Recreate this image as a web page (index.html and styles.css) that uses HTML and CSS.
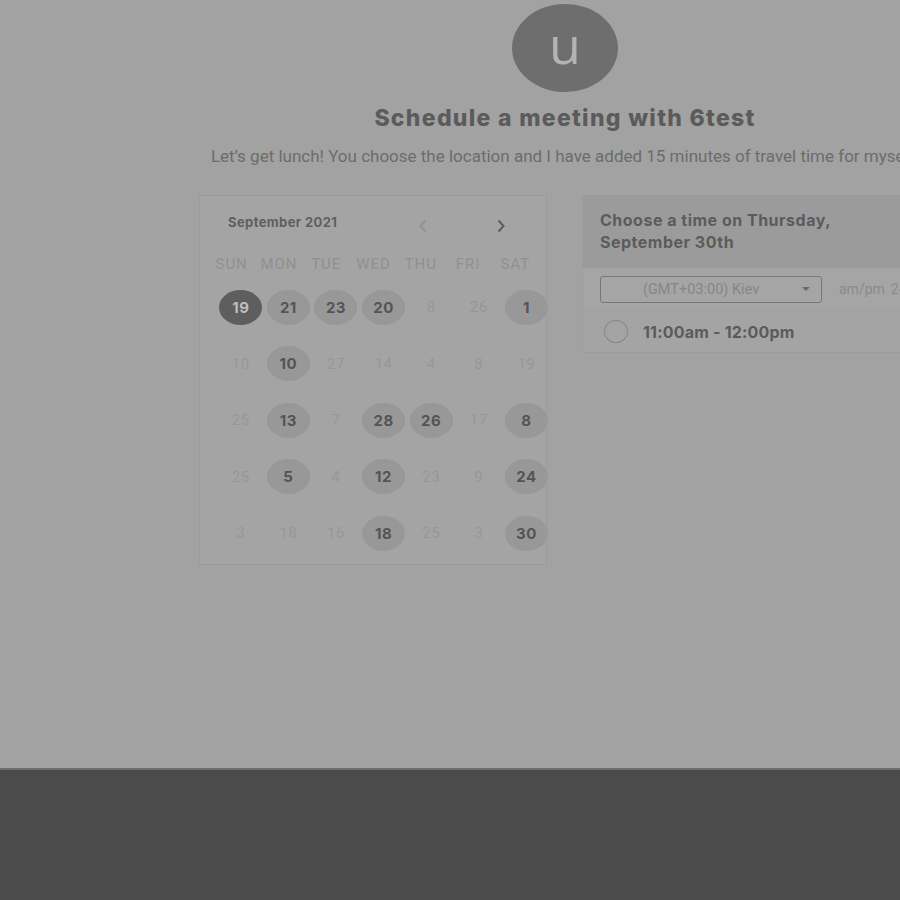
FILE: index.html
```html
<!DOCTYPE html>
<html>
<head>
<meta charset="utf-8">
<link rel="stylesheet" href="styles.css">
</head>
<body>
<div class="screen">
  <main class="page">
    <div class="avatar">u</div>
    <h1 class="title">Schedule a meeting with 6test</h1>
    <p class="subtitle">Let’s get lunch! You choose the location and I have added 15 minutes of travel time for myself.</p>
    <div class="columns">
      <section class="calendar">
        <div class="cal-head">
          <span class="month">September 2021</span>
          <span class="arrows">
            <svg class="arrow prev" width="10" height="14" viewBox="0 0 10 14"><path d="M7.5 1.5 L2.5 7 L7.5 12.5" fill="none" stroke="currentColor" stroke-width="2"/></svg>
            <svg class="arrow next" width="10" height="14" viewBox="0 0 10 14"><path d="M2.5 1.5 L7.5 7 L2.5 12.5" fill="none" stroke="currentColor" stroke-width="2"/></svg>
          </span>
        </div>
        <div class="weekdays">
          <span>SUN</span><span>MON</span><span>TUE</span><span>WED</span><span>THU</span><span>FRI</span><span>SAT</span>
        </div>
        <div class="days">
          <span class="day sel">19</span><span class="day on">21</span><span class="day on">23</span><span class="day on">20</span><span class="day">8</span><span class="day">26</span><span class="day on">1</span>
          <span class="day">10</span><span class="day on">10</span><span class="day">27</span><span class="day">14</span><span class="day">4</span><span class="day">8</span><span class="day">19</span>
          <span class="day">25</span><span class="day on">13</span><span class="day">7</span><span class="day on">28</span><span class="day on">26</span><span class="day">17</span><span class="day on">8</span>
          <span class="day">25</span><span class="day on">5</span><span class="day">4</span><span class="day on">12</span><span class="day">23</span><span class="day">9</span><span class="day on">24</span>
          <span class="day">3</span><span class="day">18</span><span class="day">16</span><span class="day on">18</span><span class="day">25</span><span class="day">3</span><span class="day on">30</span>
        </div>
      </section>
      <section class="times">
        <div class="times-head">Choose a time on Thursday,<br>September 30th</div>
        <div class="tz-row">
          <div class="tz-select">
            <span>(GMT+03:00) Kiev</span>
            <svg class="caret" width="8" height="4" viewBox="0 0 8 4"><path d="M0 0 H8 L4 4 Z" fill="currentColor"/></svg>
          </div>
          <span class="fmt">am/pm</span><span class="fmt">24h</span>
        </div>
        <div class="slot">
          <span class="radio"></span>
          <span class="slot-text">11:00am - 12:00pm</span>
        </div>
      </section>
    </div>
  </main>
  <footer class="footer"></footer>
</div>
</body>
</html>
```
FILE: styles.css
```css
html, body {
  margin: 0;
  padding: 0;
  background: #a2a2a2;
  overflow: hidden;
}
.screen {
  width: 900px;
  height: 900px;
  overflow: hidden;
  display: flex;
  flex-direction: column;
  font-family: Roboto, "Liberation Sans", sans-serif;
}
.page {
  width: 1130px;
  height: 768px;
  flex: none;
  display: flex;
  flex-direction: column;
  align-items: center;
  background: #a2a2a2;
}
.avatar {
  margin-top: 4px;
  width: 106px;
  height: 88px;
  border-radius: 50%;
  background: #6e6e6e;
  color: #b3b3b3;
  font-family: "Open Sans", sans-serif;
  font-size: 52px;
  line-height: 80px;
  text-align: center;
}
.title {
  margin: 12px 0 0;
  font-family: Inter, sans-serif;
  font-weight: 800;
  font-size: 23px;
  line-height: 28px;
  letter-spacing: 1.3px;
  color: #5b5b5b;
}
.subtitle {
  margin: 14px 0 0;
  font-size: 17px;
  line-height: 20px;
  color: #6c6c6c;
  white-space: nowrap;
}
.columns {
  margin-top: 29px;
  width: 732px;
  display: flex;
  gap: 35px;
  align-items: flex-start;
}
.calendar {
  width: 346px;
  height: 368px;
  border: 1px solid #9b9b9b;
  background: #a4a4a4;
  flex: none;
}
.cal-head {
  height: 55px;
  display: flex;
  align-items: center;
  padding: 0 0 0 28px;
}
.month {
  font-family: Inter, sans-serif;
  font-weight: 700;
  font-size: 13px;
  letter-spacing: 0.4px;
  color: #5f5f5f;
  width: 190px;
  margin-top: -3px;
}
.arrows {
  display: flex;
  gap: 68px;
  margin-top: 5px;
}
.arrow.prev { color: #939393; }
.arrow.next { color: #5c5c5c; }
.weekdays {
  height: 26px;
  margin-left: 8px;
  display: grid;
  grid-template-columns: repeat(7, 47.3px);
  align-items: center;
  font-size: 15px;
  color: #909090;
  text-align: center;
  letter-spacing: 1px;
}
.days {
  margin-top: 2px;
  margin-left: 17px;
  display: grid;
  grid-template-columns: repeat(7, 47.6px);
  grid-template-rows: repeat(5, 56.5px);
  align-items: center;
  justify-items: center;
}
.day {
  width: 43px;
  height: 35px;
  border-radius: 50%;
  display: flex;
  align-items: center;
  justify-content: center;
  font-size: 15px;
  letter-spacing: 0.5px;
  color: #979797;
}
.day.on {
  background: #989898;
  color: #545454;
  font-weight: 700;
  font-family: Inter, sans-serif;
}
.day.sel {
  background: #5e5e5e;
  color: #bdbdbd;
  font-weight: 700;
  font-family: Inter, sans-serif;
}
.times {
  width: 349px;
  flex: none;
  border: 1px solid #9d9d9d;
  border-top: none;
  background: #a4a4a4;
}
.times-head {
  height: 73px;
  box-sizing: border-box;
  padding: 14px 17px 0;
  background: #9b9b9b;
  font-family: Inter, sans-serif;
  font-weight: 700;
  font-size: 16px;
  line-height: 22px;
  letter-spacing: 0.5px;
  color: #5b5b5b;
}
.tz-row {
  height: 42px;
  display: flex;
  align-items: center;
  padding-left: 17px;
  border-bottom: 1px solid #9e9e9e;
  background: #a5a5a5;
  white-space: nowrap;
}
.tz-select {
  width: 220px;
  height: 25px;
  border: 1px solid #777;
  border-radius: 3px;
  display: flex;
  align-items: center;
  font-size: 14.5px;
  color: #868686;
  flex: none;
}
.tz-select span {
  margin-left: 42px;
}
.caret {
  margin-left: auto;
  margin-right: 11px;
  color: #6a6a6a;
}
.fmt {
  margin-left: 17px;
  font-size: 14px;
  color: #8a8a8a;
}
.fmt + .fmt { margin-left: 6px; }
.slot {
  height: 41px;
  display: flex;
  align-items: center;
  padding-left: 21px;
}
.radio {
  width: 22px;
  height: 21px;
  border: 1.5px solid #878787;
  border-radius: 50%;
}
.slot-text {
  margin-left: 15px;
  font-family: Inter, sans-serif;
  font-weight: 700;
  font-size: 16px;
  letter-spacing: 0.2px;
  color: #5b5b5b;
}
.footer {
  flex: 1;
  background: #4b4b4b;
  border-top: 2px solid #6d6d6d;
}
```
